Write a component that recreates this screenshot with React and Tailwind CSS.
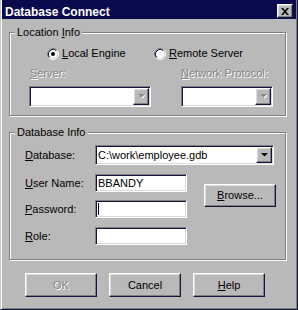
import React from "react";

const sunken =
  "border border-t-[#808080] border-l-[#808080] border-b-white border-r-white shadow-[inset_1px_1px_0_#14143c,inset_-1px_-1px_0_#dcdcdc] p-[1px]";
const raised =
  "border border-t-white border-l-white border-b-[#14143c] border-r-[#14143c] shadow-[inset_-1px_-1px_0_#808080,inset_1px_1px_0_#dcdcdc]";
const disabledText = "text-[#868686] [text-shadow:1px_1px_0_#ffffff]";

function Radio({ checked }) {
  return (
    <svg width="12" height="12" viewBox="0 0 12 12" className="shrink-0">
      <circle cx="6" cy="6" r="4.5" fill="#fff" />
      <path d="M2.11 9.89 A5.5 5.5 0 0 1 9.89 2.11" stroke="#808080" fill="none" />
      <path d="M9.89 2.11 A5.5 5.5 0 0 1 2.11 9.89" stroke="#fff" fill="none" />
      <path d="M2.82 9.18 A4.5 4.5 0 0 1 9.18 2.82" stroke="#14143c" fill="none" />
      <path d="M9.18 2.82 A4.5 4.5 0 0 1 2.82 9.18" stroke="#dcdcdc" fill="none" />
      {checked && <circle cx="6" cy="6" r="2" fill="#000" />}
    </svg>
  );
}

function Arrow({ disabled }) {
  return (
    <div className={`${raised} w-[16px] h-full flex items-center justify-center bg-[#b9b9b9]`}>
      <svg width="8" height="5" viewBox="0 0 8 5">
        {disabled && <path d="M2 1 H9 L5.5 4.5 Z" fill="#fff" />}
        <path d="M1 0 H8 L4.5 3.5 Z" fill={disabled ? "#868686" : "#000"} />
      </svg>
    </div>
  );
}

function Group({ title, className, children }) {
  return (
    <div
      className={`relative border border-[#808080] shadow-[1px_1px_0_#ffffff,inset_1px_1px_0_#ffffff] ${className}`}
    >
      <div className="absolute left-[5px] top-[-7px] px-[2px] bg-[#b9b9b9] leading-[13px]">
        {title}
      </div>
      {children}
    </div>
  );
}

function U({ children }) {
  return <span className="underline underline-offset-[1px] decoration-1">{children}</span>;
}

function Button({ children, disabled }) {
  return (
    <div
      className={`${raised} w-[72px] h-[24px] flex items-center justify-center leading-[13px] ${
        disabled ? disabledText : ""
      }`}
    >
      {children}
    </div>
  );
}

export default function App() {
  return (
    <div className="w-[298px] h-[310px] bg-[#b9b9b9] font-['Liberation_Sans',Arial,sans-serif] text-[11px] text-black border-l border-l-[#c8c8c8] border-r border-b border-r-[#14143c] border-b-[#14143c] shadow-[inset_1px_0_0_#ffffff,inset_-1px_-1px_0_#808080] flex flex-col overflow-hidden">
      {/* Title bar */}
      <div className="h-[19px] mx-[1px] bg-[#0a0a4e] flex items-start justify-between">
        <div className="pl-[3px] pt-[5px] leading-[14px] text-[12px] font-bold text-white">
          Database Connect
        </div>
        <div className={`${raised} mt-[4px] mr-[3px] w-[16px] h-[14px] bg-[#b9b9b9] flex items-center justify-center`}>
          <svg width="8" height="7" viewBox="0 0 8 7">
            <path d="M0 0 L2 0 L4 2.2 L6 0 L8 0 L5 3.5 L8 7 L6 7 L4 4.8 L2 7 L0 7 L3 3.5 Z" fill="#000" />
          </svg>
        </div>
      </div>

      {/* Location Info */}
      <Group
        title={
          <>
            Location <U>I</U>nfo
          </>
        }
        className="ml-[8px] mt-[13px] w-[277px] h-[84px]"
      >
        <div className="flex items-center h-[13px] mt-[14px] pl-[37px] leading-[13px]">
          <div className="w-[107px] flex items-center gap-[3px]">
            <Radio checked />
            <span>
              <U>L</U>ocal Engine
            </span>
          </div>
          <div className="flex items-center gap-[3px]">
            <Radio />
            <span>
              <U>R</U>emote Server
            </span>
          </div>
        </div>
        <div className="flex mt-[7px] pl-[19px] gap-[30px]">
          <div className="w-[122px] flex flex-col">
            <div className={`ml-[1px] leading-[13px] ${disabledText}`}>
              <U>S</U>erver:
            </div>
            <div className={`${sunken} mt-[6px] h-[21px] bg-white flex justify-end`}>
              <Arrow disabled />
            </div>
          </div>
          <div className="w-[92px] flex flex-col">
            <div className={`leading-[13px] ${disabledText}`}>
              <U>N</U>etwork Protocol:
            </div>
            <div className={`${sunken} mt-[6px] h-[21px] bg-white flex justify-end`}>
              <Arrow disabled />
            </div>
          </div>
        </div>
      </Group>

      {/* Database Info */}
      <Group title="Database Info" className="ml-[8px] mt-[16px] w-[277px] h-[128px]">
        <div className="flex items-center mt-[12px] pl-[15px]">
          <div className="w-[70px] leading-[13px]">
            <U>D</U>atabase:
          </div>
          <div className={`${sunken} w-[179px] h-[20px] bg-white flex items-center`}>
            <div className="flex-1 pl-[1px] leading-[13px]">C:\work\employee.gdb</div>
            <Arrow />
          </div>
        </div>
        <div className="flex mt-[9px] pl-[15px]">
          <div className="flex flex-col gap-[8px]">
            <div className="flex items-center">
              <div className="w-[70px] leading-[13px]">
                <U>U</U>ser Name:
              </div>
              <div className={`${sunken} w-[92px] h-[18px] bg-white flex items-center`}>
                <div className="pl-[1px] leading-[13px]">BBANDY</div>
              </div>
            </div>
            <div className="flex items-center">
              <div className="w-[70px] leading-[13px]">
                <U>P</U>assword:
              </div>
              <div className={`${sunken} w-[92px] h-[18px] bg-white flex items-center`}>
                <div className="ml-[1px] w-[1px] h-[12px] bg-black" />
              </div>
            </div>
            <div className="flex items-center mt-[1px]">
              <div className="w-[70px] leading-[13px]">
                <U>R</U>ole:
              </div>
              <div className={`${sunken} w-[92px] h-[18px] bg-white`} />
            </div>
          </div>
          <div className="ml-[17px] mt-[10px]">
            <div className={`${raised} w-[72px] h-[23px] flex items-center justify-center leading-[13px]`}>
              <span>
                <U>B</U>rowse...
              </span>
            </div>
          </div>
        </div>
      </Group>

      {/* Buttons */}
      <div className="flex mt-[13px] pl-[24px] gap-[12px]">
        <Button disabled>OK</Button>
        <Button>Cancel</Button>
        <Button>
          <span>
            <U>H</U>elp
          </span>
        </Button>
      </div>
    </div>
  );
}
